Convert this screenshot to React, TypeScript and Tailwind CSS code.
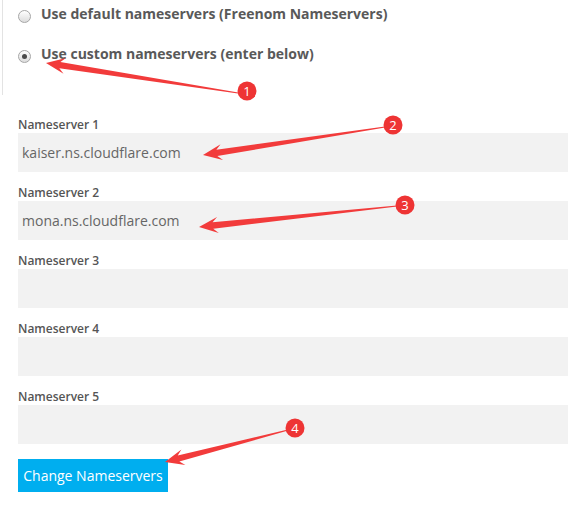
import React from "react";

type Pt = [number, number];

function arrowPoints(tail: Pt, tip: Pt): string {
  const dx = tip[0] - tail[0];
  const dy = tip[1] - tail[1];
  const len = Math.hypot(dx, dy);
  const ux = dx / len;
  const uy = dy / len;
  const nx = -uy;
  const ny = ux;
  const at = (d: number, w: number): string =>
    `${(tip[0] - ux * d + nx * w).toFixed(2)},${(tip[1] - uy * d + ny * w).toFixed(2)}`;
  const tl = (w: number): string =>
    `${(tail[0] + nx * w).toFixed(2)},${(tail[1] + ny * w).toFixed(2)}`;
  return [
    tl(0.5),
    at(14, 3.2),
    at(19, 8),
    `${tip[0]},${tip[1]}`,
    at(19, -8),
    at(14, -3.2),
    tl(-0.5),
  ].join(" ");
}

const arrows: { tail: Pt; tip: Pt; c: Pt; n: string }[] = [
  { tail: [238, 93], tip: [46, 63], c: [247, 91], n: "1" },
  { tail: [385, 127], tip: [203, 155], c: [393, 125], n: "2" },
  { tail: [397, 206], tip: [199, 227], c: [405, 205], n: "3" },
  { tail: [288, 430], tip: [165, 462], c: [295, 428], n: "4" },
];

function Radio({ checked }: { checked?: boolean }) {
  return (
    <span className="flex h-[13px] w-[13px] shrink-0 items-center justify-center rounded-full border border-[#a6a6a6] bg-gradient-to-b from-[#ffffff] to-[#dcdcdc]">
      {checked && <span className="h-[5px] w-[5px] rounded-full bg-[#4a4a4a]" />}
    </span>
  );
}

function Field({ label, value }: { label: string; value?: string }) {
  return (
    <div className="mb-[13px] flex flex-col">
      <div className="h-[16px] text-[12px] font-semibold leading-[16px] text-[#555555]">{label}</div>
      <div className="flex h-[39px] items-center bg-[#f2f2f2] pl-[4px] text-[14px] text-[#666666]">
        {value}
      </div>
    </div>
  );
}

export default function App() {
  return (
    <div
      className="relative h-[505px] w-[568px] overflow-hidden bg-white"
      style={{ fontFamily: '"Open Sans", "Liberation Sans", sans-serif' }}
    >
      <div className="ml-[2px] h-[95px] border-l border-[#e3e3e3]">
        <div className="flex h-[32px] items-center pl-[15px] pt-[1px]">
          <Radio />
          <span className="mb-[6px] ml-[10px] text-[14px] font-bold text-[#595959]">
            Use default nameservers (Freenom Nameservers)
          </span>
        </div>
        <div className="mt-[8px] flex h-[32px] items-center pl-[15px] pt-[1px]">
          <Radio checked />
          <span className="mb-[6px] ml-[10px] text-[14px] font-bold text-[#595959]">
            Use custom nameservers (enter below)
          </span>
        </div>
      </div>
      <div className="mt-[22px] pl-[18px]">
        <Field label="Nameserver 1" value="kaiser.ns.cloudflare.com" />
        <Field label="Nameserver 2" value="mona.ns.cloudflare.com" />
        <Field label="Nameserver 3" />
        <Field label="Nameserver 4" />
        <Field label="Nameserver 5" />
        <button className="mt-[15px] flex h-[33px] w-[150px] items-center justify-center bg-[#00aeef] text-[14px] text-white">
          Change Nameservers
        </button>
      </div>
      <svg className="pointer-events-none absolute inset-0" width="568" height="505">
        {arrows.map((a) => (
          <g key={a.n}>
            <polygon points={arrowPoints(a.tail, a.tip)} fill="#f23b3b" />
            <circle cx={a.c[0]} cy={a.c[1]} r="9.5" fill="#ee3434" />
            <text
              x={a.c[0]}
              y={a.c[1] + 4.5}
              textAnchor="middle"
              fontSize="13"
              fill="#ffffff"
              fontFamily="Open Sans, sans-serif"
            >
              {a.n}
            </text>
          </g>
        ))}
      </svg>
    </div>
  );
}
